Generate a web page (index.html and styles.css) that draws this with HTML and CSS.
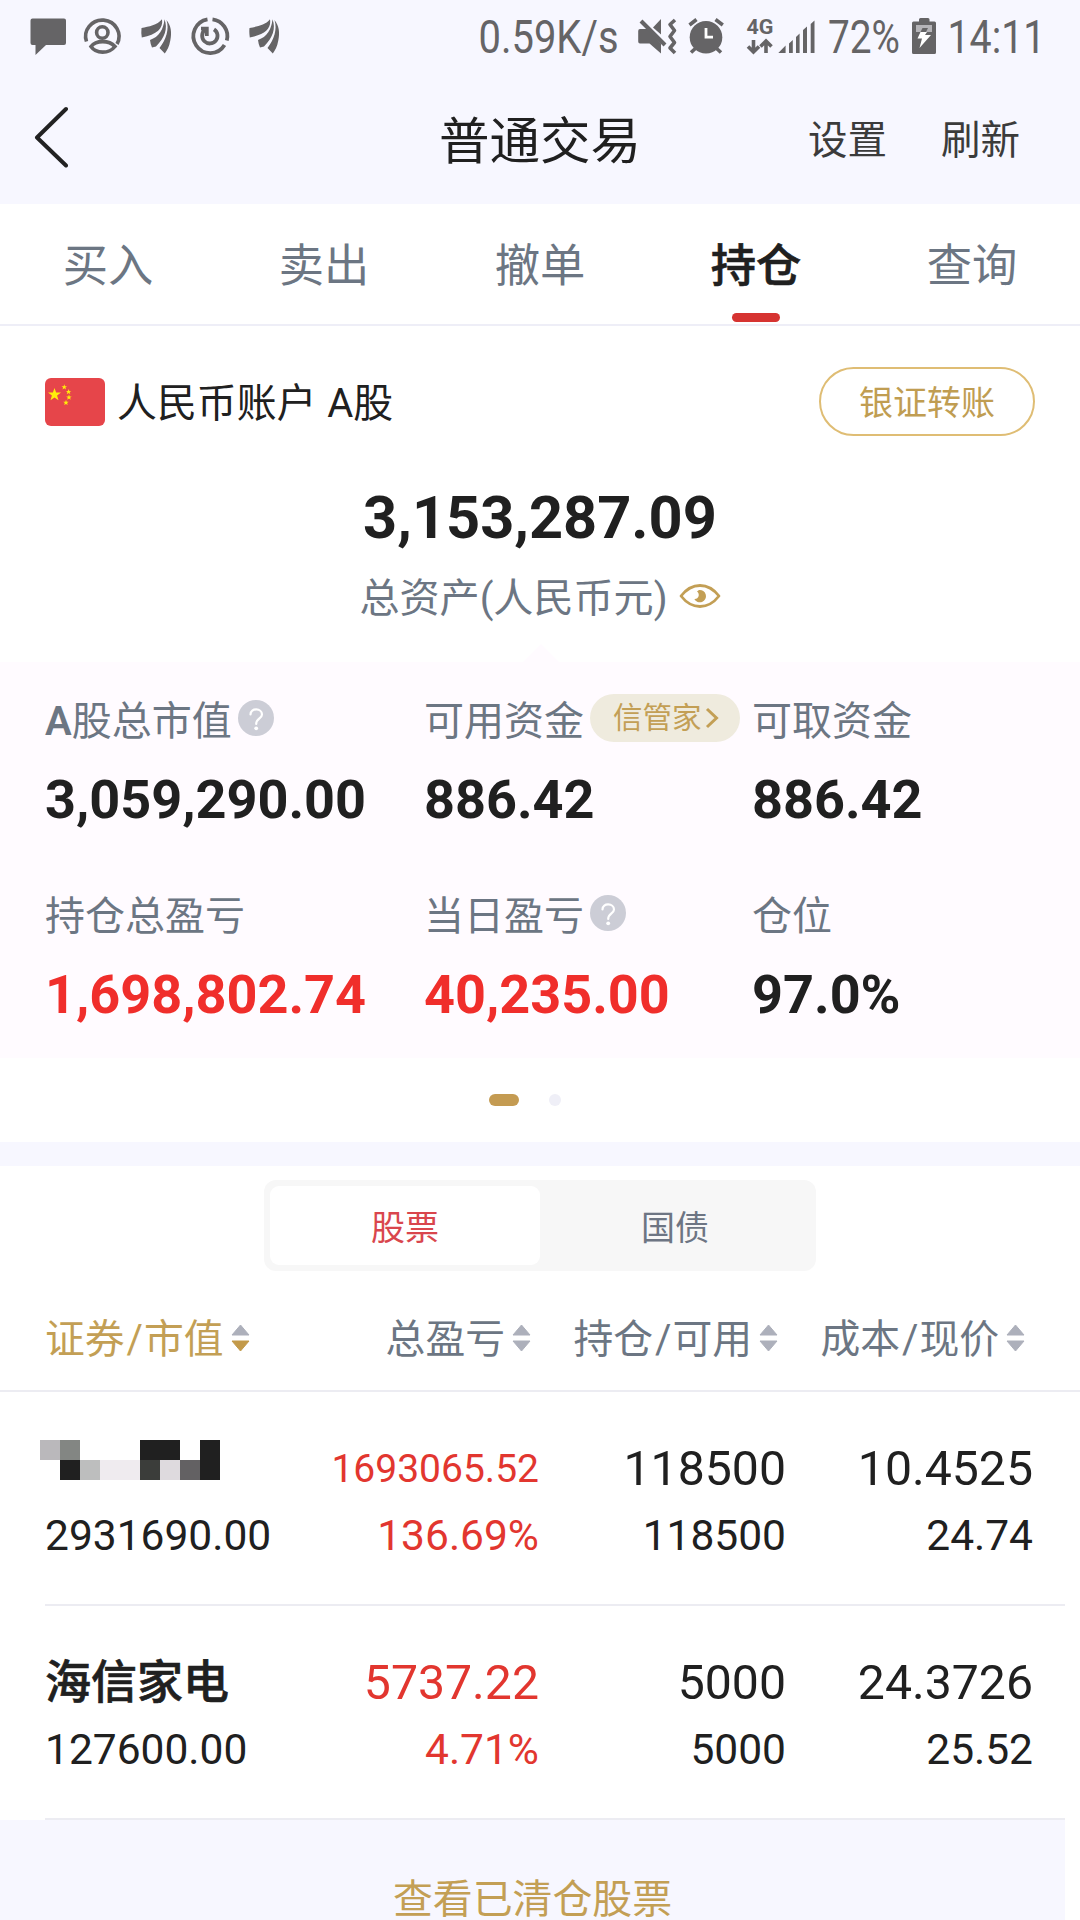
FILE: index.html
```html
<!DOCTYPE html>
<html lang="zh-CN">
<head>
<meta charset="utf-8">
<title>普通交易</title>
<link rel="stylesheet" href="styles.css">
</head>
<body>
<svg width="0" height="0" class="defs">
  <symbol id="leaf" viewBox="0 0 31 36">
    <path d="M0.500 9.500C8 8 16 7 21 0.800C22.500 10 16 16 0.800 19Q0 14 0.500 9.500Z"/>
    <path d="M23.500 0.800C27 10 24 19 15 28L11 29Q9.500 26 9 21.500C18 18.500 22.500 11 23.500 0.800Z"/>
    <path d="M25.500 1.500C30 7 31 14 29.300 22C28.300 28 26 32 23.800 35L18.500 29.500C25 21 28.500 11 25.500 1.500Z"/>
  </symbol>
  <symbol id="sort" viewBox="0 0 19 28">
    <path d="M9.500 1L18 11H1Z" fill="#adb0bb" stroke="#adb0bb" stroke-linejoin="round"/>
    <path d="M9.500 27L18 17H1Z" fill="currentColor" stroke="currentColor" stroke-linejoin="round"/>
  </symbol>
  <symbol id="help" viewBox="0 0 36 36">
    <circle cx="18" cy="18" r="18" fill="#cccdd6"/>
    <path d="M12.500 14.500C12.500 7.500 24 8 24 14.500C24 18.500 18.200 18.500 18.200 24" fill="none" stroke="#fff" stroke-width="2.200" stroke-linecap="round"/>
    <circle cx="18.200" cy="28.300" r="1.900" fill="#fff"/>
  </symbol>
</svg>
<header class="header">
  <div class="status">
    <svg viewBox="30 0 54 72" width="54" height="72"><path d="M32.500 18.500H64a2 2 0 0 1 2 2V43a2 2 0 0 1-2 2H46L35.500 55V45H32.500a2 2 0 0 1-2-2V20.500a2 2 0 0 1 2-2Z"/></svg>
    <svg viewBox="84 0 57 72" width="57" height="72"><g fill="none" stroke="#656466" stroke-width="3.600"><path d="M86.500 41.500A16.700 16.200 0 1 1 117 44"/><circle cx="102.300" cy="32.500" r="5.700"/><path d="M91 46.500C96 40 109 40 115 46.500C109 54 96 54 91 46.500Z"/></g></svg>
    <svg viewBox="141 0 50 72" width="50" height="72"><use href="#leaf" x="141" y="18.500" width="31" height="36"/></svg>
    <svg viewBox="191 0 58 72" width="58" height="72"><g fill="none" stroke="#656466" stroke-width="3.800"><path d="M207.500 19.300A16.800 17 0 1 0 224.500 45"/><path d="M212.500 19.300A16.800 17 0 0 1 226.800 40.500"/><path d="M205 29.800A7.700 7.700 0 1 0 214 29.300"/><path d="M201 28.600H206.800V36"/></g></svg>
    <svg viewBox="249 0 30 72" width="30" height="72"><use href="#leaf" x="249" y="18.500" width="31" height="36"/></svg>
    <span class="spacer"></span>
    <svg viewBox="478 0 160 72" width="160" height="72"><text x="478.500" y="53" font-size="46" textLength="140" lengthAdjust="spacingAndGlyphs">0.59K/s</text></svg>
    <svg viewBox="638 0 51 72" width="51" height="72"><path d="M638.200 31Q638.200 29 640 29H647.500L661 43.500V53.500L649.500 43.500H640Q638.200 43.500 638.200 41.500ZM653 27.500L661 19V34.500Z"/><path d="M641 21L665 45" stroke="#656466" stroke-width="4"/><path d="M675 20L670 24.500L674.500 30.500L670 36.500L674.500 42.500L670 48L675 53" fill="none" stroke="#656466" stroke-width="3.600" stroke-linejoin="round"/></svg>
    <svg viewBox="689 0 57 72" width="57" height="72"><circle cx="706" cy="37.300" r="16.300"/><path d="M689.500 25L696.500 19.500M715.500 19.500L722.800 25M691 52.500L697 47M721 52.500L715 47" stroke="#656466" stroke-width="3.600"/><path d="M706 28V37.200H713" fill="none" stroke="#fff" stroke-width="2.800"/></svg>
    <svg viewBox="746 0 32 72" width="32" height="72"><text x="746.500" y="33.500" font-size="21" font-weight="700" textLength="27" lengthAdjust="spacingAndGlyphs">4G</text><path d="M753.500 40V52M748 46.500L753.500 52L759 46.500M766 53V41M760.500 46.500L766 41L771.500 46.500" fill="none" stroke="#656466" stroke-width="3.600"/></svg>
    <svg viewBox="778 0 50 72" width="50" height="72"><path d="M778.300 53L785.600 45.500V53ZM789 43.500L792.800 40V53H789ZM796 37L799.600 33.500V53H796ZM803 30L807 26.500V53H803ZM810.700 24L814.500 20.500V53H810.700Z"/></svg>
    <svg viewBox="828 0 84 72" width="84" height="72"><text x="828" y="53" font-size="46" textLength="72" lengthAdjust="spacingAndGlyphs">72%</text></svg>
    <svg viewBox="912 0 37 72" width="37" height="72"><path d="M913.500 21.500H919V19.500Q919 18 920.500 18H928Q929.500 18 929.500 19.500V21.500H934.500Q936 21.500 936 23V52.500Q936 54 934.500 54H913.500Q912 54 912 52.500V23Q912 21.500 913.500 21.500Z"/><path d="M916 25H932V32H916Z" fill="#b5b4b8"/><path d="M920.500 32H927L925 35H931L919.500 48L922 38.500H917.500Z" fill="#fff"/><path d="M922.500 28H928L926 32H920.500Z"/></svg>
    <svg viewBox="949 0 93 72" width="93" height="72"><text x="947.500" y="53" font-size="46" textLength="98" lengthAdjust="spacingAndGlyphs">14:11</text></svg>
  </div>
  <nav class="titlebar">
    <svg class="back" viewBox="0 0 34 62" width="34" height="62"><path d="M32 3L3 31.500L32 59.500" fill="none" stroke="#222" stroke-width="4" stroke-linecap="round" stroke-linejoin="round"/></svg>
    <h1 class="title">普通交易</h1>
    <div class="actions"><a>设置</a><a>刷新</a></div>
  </nav>
</header>
<nav class="tabs">
  <a class="tab">买入</a><a class="tab">卖出</a><a class="tab">撤单</a><a class="tab active">持仓</a><a class="tab">查询</a>
</nav>
<section class="account">
  <svg class="flag" viewBox="0 0 60 48" width="60" height="48"><rect width="60" height="48" rx="6" fill="#e6454a"/><g fill="#ffee0a"><path d="M9.500 10L11.100 14.600H16L12.100 17.500L13.500 22.300L9.500 19.400L5.500 22.300L6.900 17.500L3 14.600H7.900Z"/><path d="M19.300 6.200L20 8.200H22L20.400 9.400L21 11.500L19.300 10.300L17.500 11.500L18.100 9.400L16.500 8.200H18.600Z"/><path d="M23.600 10.900L24.300 12.900H26.300L24.700 14.100L25.300 16.200L23.600 15L21.800 16.200L22.400 14.100L20.800 12.900H22.900Z"/><path d="M24 16.500L24.700 18.500H26.700L25.100 19.700L25.700 21.800L24 20.600L22.200 21.800L22.800 19.700L21.200 18.500H23.300Z"/><path d="M21 21.800L21.700 23.800H23.700L22.100 25L22.700 27.100L21 25.900L19.200 27.100L19.800 25L18.200 23.800H20.300Z"/></g></svg>
  <span class="account-name">人民币账户 A股</span>
  <a class="transfer">银证转账</a>
</section>
<section class="total">
  <div class="total-value">3,153,287.09</div>
  <div class="total-label"><span>总资产(人民币元)</span>
    <svg viewBox="0 0 42 24" width="42" height="24"><path d="M2 12C13-2 29-2 40 12C29 26 13 26 2 12Z" fill="none" stroke="#c39f55" stroke-width="2.800" stroke-linejoin="round"/><path d="M20 6A6.200 6.200 0 1 1 15.300 15C19.500 15.500 21.500 10 18 7.500Z" fill="#c39f55"/></svg>
  </div>
  <svg class="notch" viewBox="0 0 36 18" width="36" height="18"><path d="M0 18L18 0L36 18Z" fill="#fffbff"/></svg>
</section>
<section class="stats">
  <div class="stat"><div class="label"><span><b>A</b>股总市值</span><svg class="help"><use href="#help"/></svg></div><div class="value">3,059,290.00</div></div>
  <div class="stat"><div class="label"><span>可用资金</span><span class="pill"><span>信管家</span><svg viewBox="0 0 14 22" width="14" height="22"><path d="M2 2L11.500 11L2 20" fill="none" stroke="#c39f55" stroke-width="3"/></svg></span></div><div class="value">886.42</div></div>
  <div class="stat"><div class="label"><span>可取资金</span></div><div class="value">886.42</div></div>
  <div class="stat"><div class="label"><span>持仓总盈亏</span></div><div class="value up">1,698,802.74</div></div>
  <div class="stat"><div class="label"><span>当日盈亏</span><svg class="help"><use href="#help"/></svg></div><div class="value up">40,235.00</div></div>
  <div class="stat"><div class="label"><span>仓位</span></div><div class="value">97.0%</div></div>
</section>
<div class="pager"><i class="page current"></i><i class="page"></i></div>
<section class="switch-row">
  <div class="switch"><a class="option selected">股票</a><a class="option">国债</a></div>
</section>
<div class="cols thead">
  <span class="th sorted">证券<i>/</i>市值<svg><use href="#sort"/></svg></span>
  <span class="th">总盈亏<svg><use href="#sort"/></svg></span>
  <span class="th">持仓<i>/</i>可用<svg><use href="#sort"/></svg></span>
  <span class="th">成本<i>/</i>现价<svg><use href="#sort"/></svg></span>
</div>
<div class="row">
  <div class="cols">
    <div class="cell name">
      <div class="big masked"><svg viewBox="0 0 180 40" width="180" height="40" shape-rendering="crispEdges"><path d="M0 0H20V20H0Z" fill="#bab8bb"/><path d="M20 0H40V20H20Z" fill="#838683"/><path d="M20 20H40V40H20ZM100 0H140V20H100ZM160 0H180V40H160Z" fill="#202020"/><path d="M40 20H60V40H40Z" fill="#bdbebe"/><path d="M60 20H100V40H60Z" fill="#efebef"/><path d="M100 20H120V40H100Z" fill="#3b3d3a"/><path d="M120 20H140V40H120Z" fill="#dedade"/><path d="M140 20H160V40H140Z" fill="#636163"/></svg></div>
      <div class="small">2931690.00</div>
    </div>
    <div class="cell up"><div class="big fit">1693065.52</div><div class="small">136.69%</div></div>
    <div class="cell"><div class="big">118500</div><div class="small">118500</div></div>
    <div class="cell"><div class="big">10.4525</div><div class="small">24.74</div></div>
  </div>
</div>
<div class="row">
  <div class="cols">
    <div class="cell name"><div class="big">海信家电</div><div class="small">127600.00</div></div>
    <div class="cell up"><div class="big">5737.22</div><div class="small">4.71%</div></div>
    <div class="cell"><div class="big">5000</div><div class="small">5000</div></div>
    <div class="cell"><div class="big">24.3726</div><div class="small">25.52</div></div>
  </div>
</div>
<footer class="cleared"><a>查看已清仓股票</a></footer>
</body>
</html>
```

FILE: styles.css
```css
* { box-sizing: border-box; }
body {
  margin: 0;
  width: 1080px;
  height: 1920px;
  overflow: hidden;
  background: #fff;
  color: #202020;
  font-family: Roboto, "Noto Sans CJK SC", sans-serif;
  font-size: 39px;
}
svg { display: block; flex: none; }
.defs { position: absolute; }

.header { height: 204px; background: #f7f7ff; }
.status { display: flex; height: 72px; padding: 0 38px 0 30px; }
.status svg { fill: #656466; overflow: visible; }
.spacer { flex: 1; }
.titlebar {
  display: grid;
  grid-template-columns: 1fr auto 1fr;
  align-items: center;
  height: 132px;
  padding: 2px 60px 0 34px;
  line-height: 60px;
}
.back { margin-bottom: 4px; }
.title { margin: 0 0 0 26px; font-size: 50.500px; font-weight: 400; padding-top: 5px; }
.actions { display: flex; justify-content: flex-end; gap: 54px; color: #3b3b3b; font-size: 39.500px; padding-top: 4px; }

.tabs { display: flex; height: 122px; border-bottom: 2px solid #eeeef7; }
.tab {
  display: flex;
  flex-direction: column;
  align-items: center;
  flex: 1;
  padding-top: 33px;
  font-size: 45.300px;
  line-height: 60px;
  color: #6c7683;
}
.active { color: #202020; font-weight: 500; -webkit-text-stroke: 0.600px #202020; }
.active::after { content: ""; width: 48px; height: 9px; margin-top: 16px; border-radius: 5px; background: #d63331; }

.account { display: flex; align-items: center; height: 154px; padding: 0 45px 3px; }
.account-name { margin-left: 12px; padding-top: 5px; font-size: 39.900px; line-height: 60px; word-spacing: 1px; }
.transfer {
  width: 216px;
  height: 69px;
  margin-left: auto;
  border: 2px solid #dfbd74;
  border-radius: 35px;
  color: #c09d52;
  font-size: 34px;
  line-height: 69px;
  text-align: center;
}

.total { display: flex; flex-direction: column; align-items: center; height: 182px; }
.total-value { height: 76px; font-size: 59.500px; font-weight: 700; line-height: 76px; }
.total-label { display: flex; align-items: center; gap: 11px; height: 84px; font-size: 40.100px; line-height: 84px; color: #6c7683; }
.total-label span { padding-top: 1px; }
.total-label svg { margin-bottom: 4px; }
.notch { margin: 4px 0 0 2px; }

.stats {
  display: grid;
  grid-template-columns: 379px 328px 1fr;
  grid-auto-rows: 195px;
  height: 396px;
  padding: 24px 0 0 45px;
  background: #fffbff;
}
.label { display: flex; align-items: center; height: 68px; font-size: 40px; color: #6c7683; white-space: nowrap; }
.label > span:first-child { line-height: 68px; padding-top: 3px; }
.label b { font-weight: 600; }
.help { width: 36px; height: 36px; margin: 0 0 4px 6px; }
.pill {
  display: flex;
  align-items: center;
  gap: 3px;
  width: 150px;
  height: 48px;
  margin: 0 0 4px 6px;
  padding-left: 23px;
  border-radius: 24px;
  background: #efebde;
  color: #c39f55;
  font-size: 29.500px;
  line-height: 48px;
}
.pill span { height: 48px; }
.value { height: 86px; font-size: 54px; font-weight: 700; line-height: 92px; }
.stats .up { color: #f02e2b; }

.pager { display: flex; justify-content: center; align-items: center; gap: 30px; height: 84px; padding-right: 31px; }
.page { width: 12px; height: 12px; border-radius: 6px; background: #efeff7; }
.current { width: 30px; background: #c49b52; }

.switch-row { display: flex; justify-content: center; height: 129px; padding-top: 14px; border-top: 24px solid #f7f7ff; }
.switch { display: flex; width: 552px; height: 91px; padding: 6px; border-radius: 12px; background: #f7f7f7; }
.option { flex: 1; border-radius: 9px; font-size: 34px; line-height: 85px; text-align: center; color: #6d7583; }
.selected { background: #fff; color: #d9464d; }

.cols { display: grid; grid-template-columns: 216px 278px 247px 247px; padding-left: 45px; }
.thead { height: 121px; border-bottom: 2px solid #ececf2; font-size: 39.800px; color: #6c7683; }
.th { display: flex; align-items: center; justify-content: flex-end; line-height: 60px; padding-top: 18px; white-space: nowrap; }
.th i { padding: 0 1px 0 2px; font-style: normal; }
.th svg { width: 19px; height: 28px; margin: 0 0 3px 7px; color: #adb0bb; }
.th:first-child { justify-content: flex-start; }
.th:nth-child(n+2) { padding-right: 8px; }
.th.sorted { color: #c39f55; }
.th.sorted svg { color: #c39a4a; }

.row { height: 214px; margin-right: 15px; background: linear-gradient(#ececf2, #ececf2) 45px 100% / 1020px 2px no-repeat; padding-top: 42px; }
.cell { text-align: right; }
.name { text-align: left; }
.big { height: 68px; font-size: 48.200px; line-height: 70px; }
.name .big { font-size: 46px; font-weight: 500; line-height: 68px; white-space: nowrap; -webkit-text-stroke: 0.600px #202020; }
.fit { font-size: 39px; }
.small { height: 68px; font-size: 42.500px; line-height: 68px; }
.masked { padding-top: 6px; }
.masked svg { margin-left: -5px; }
.row .up { color: #e2362f; }

.cleared { height: 100px; margin-right: 15px; padding-top: 50px; background: #f7f7ff; color: #c39f55; font-size: 39.900px; line-height: 60px; text-align: center; }
```
